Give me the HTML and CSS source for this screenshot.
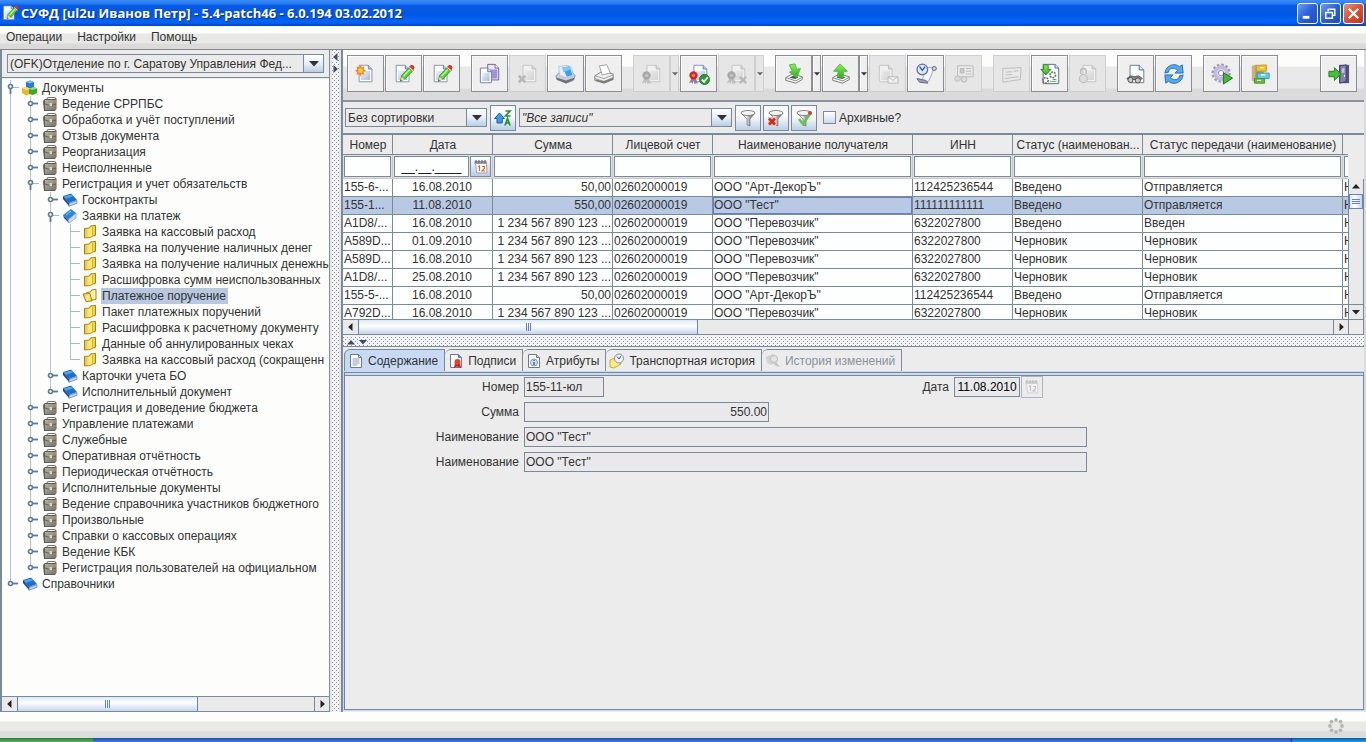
FILE: index.html
```html
<!DOCTYPE html>
<html lang="ru">
<head>
<meta charset="utf-8">
<title>СУФД [ul2u Иванов Петр] - 5.4-patch46 - 6.0.194 03.02.2012</title>
<link rel="stylesheet" href="styles.css">
</head>
<body>
<svg class="defs" aria-hidden="true">
  <defs>
    <linearGradient id="gp" x1="0" y1="0" x2="1" y2="1"><stop offset="0" stop-color="#f0f3fb"/><stop offset="1" stop-color="#a9b8de"/></linearGradient>
    <linearGradient id="gf" x1="0" y1="0" x2="1" y2="0"><stop offset="0" stop-color="#e8bd2c"/><stop offset=".5" stop-color="#fff283"/><stop offset="1" stop-color="#edc630"/></linearGradient>
    <linearGradient id="gm" x1="0" y1="0" x2="1" y2="0"><stop offset="0" stop-color="#777"/><stop offset=".35" stop-color="#f4f4f4"/><stop offset=".65" stop-color="#999"/><stop offset="1" stop-color="#555"/></linearGradient>
    <linearGradient id="gl" x1="0" y1="0" x2="0" y2="1"><stop offset="0" stop-color="#8cf25c"/><stop offset="1" stop-color="#2eae1e"/></linearGradient>
    <linearGradient id="gc" x1="0" y1="0" x2="1" y2="1"><stop offset="0" stop-color="#b3b0a8"/><stop offset="1" stop-color="#77736a"/></linearGradient>
  </defs>
  <symbol id="page" viewBox="0 0 24 24"><path d="M4.500 2.500h10l4 4v14h-14z" fill="#fff" stroke="#7e8cae"/><path d="M6.500 8.500h10v10h-10z" fill="url(#gp)"/><path d="M14.500 2.500v4h4" fill="#bcd0f0" stroke="#5678b8"/></symbol>
  <symbol id="pencil" viewBox="0 0 24 24"><path d="M8 20l1.500-6.500 9-9.500 4 3.500-9 9.500z" fill="#5bd232" stroke="#24821a" stroke-width=".8"/><path d="M11.500 14.500l8-8.500" stroke="#b5f98c" stroke-width="1.500"/><path d="M8 20l1.400-5 3.200 2.900z" fill="#f0d8a0"/><path d="M8 20l.5-2 1.200 1z" fill="#333"/><circle cx="20.500" cy="5" r="2.800" fill="#e03328"/><path d="M17.800 4.800l3.900 3.500" stroke="#ddd" stroke-width="1.300"/></symbol>
  <symbol id="i-new" viewBox="0 0 24 24"><use href="#page"/><path d="M6 2l1.500 2.700 3-.9-.9 3L12 8.500l-2.700 1.500.9 3-3-.9L6 15l-1.500-2.900-3 .9.9-3L0 8.500l2.500-1.700-.9-3 3 .9z" fill="#f58a1c"/><circle cx="6" cy="8.300" r="2.500" fill="#ffd34d"/></symbol>
  <symbol id="i-edit" viewBox="0 0 24 24"><use href="#page" x="-1"/><use href="#pencil"/></symbol>
  <symbol id="i-copy" viewBox="0 0 24 24"><path d="M9.500 1.500h8l4 4v13h-12z" fill="#ece8fa" stroke="#685c99"/><path d="M12 7h8v10h-8z" fill="#a394d0"/><path d="M17.500 1.500v4h4" fill="#fff" stroke="#685c99"/><path d="M1.500 5.500h8l4 4v12h-12z" fill="#fff" stroke="#6b7da6"/><path d="M3.500 10.500h8v9h-8z" fill="url(#gp)"/><path d="M9.500 5.500v4h4" fill="#c7d7f2" stroke="#5678b8"/></symbol>
  <symbol id="i-del" viewBox="0 0 24 24"><use href="#page" x="2"/><path d="M2 14l7 7M9 14l-7 7" stroke="#777" stroke-width="3"/></symbol>
  <symbol id="i-scan" viewBox="0 0 24 24"><path d="M1 14l4-4h14l3 4-2 5-8 3-10-4z" fill="#c9ccd1" stroke="#8a8d92"/><path d="M2 16l10 3 9-3v2l-9 4-10-4z" fill="#6b7078"/><path d="M4 4l9-1.500 5 2 2 9-8 2.500-7-3z" fill="#e6eef6" stroke="#b7c6d8"/><path d="M8 5l8-1.500 3 9.500-6 2z" fill="#3aa0ec"/><path d="M8 5l8-1.500 1 3.500-8 3z" fill="#7cc7f8"/></symbol>
  <symbol id="i-print" viewBox="0 0 24 24"><path d="M2 14l8-5 12 3v6l-10 4-10-3z" fill="#f1f1f2" stroke="#7c7c7c"/><path d="M7 3l8-1 4 9-9 2z" fill="#fff" stroke="#999"/><path d="M2 14l10 3 10-4M2 17l10 3 10-4" fill="none" stroke="#999"/><path d="M3 19l9 3 10-4v-2l-10 4-9-2z" fill="#777"/></symbol>
  <symbol id="i-seal" viewBox="0 0 24 24"><use href="#page" x="2"/><path d="M4 16l-3 6 3-1 1 2 2-6zM8 16l3 6h-2l-2 1-1-6z" fill="#7f86a3"/><circle cx="6" cy="13.500" r="4.500" fill="#d9271c"/><circle cx="6" cy="13.500" r="1.800" fill="#f27c5e"/></symbol>
  <symbol id="i-sealok" viewBox="0 0 24 24"><use href="#i-seal"/><circle cx="18" cy="18" r="5.500" fill="#2a9e35" stroke="#1c7327"/><path d="M15 18l2.500 2.500 4-5" fill="none" stroke="#fff" stroke-width="2"/></symbol>
  <symbol id="i-sealx" viewBox="0 0 24 24"><use href="#i-seal"/><path d="M15 15l7 7M22 15l-7 7" stroke="#777" stroke-width="2.500"/></symbol>
  <symbol id="tray" viewBox="0 0 24 24"><path d="M3 16l7-4 11 3v3l-7 4-11-3z" fill="#f3f3f3" stroke="#777"/><path d="M3 16l11 3.500 7-4" fill="none" stroke="#888"/><path d="M7 16l4-2 6 1.500-3.500 2z" fill="#555"/></symbol>
  <symbol id="i-in" viewBox="0 0 24 24"><use href="#tray"/><path d="M7 2l6-1 2 6 4-1-4 10-8-6 3-1z" fill="url(#gl)" stroke="#48b83a"/></symbol>
  <symbol id="i-out" viewBox="0 0 24 24"><use href="#tray"/><path d="M11 1l8 8h-4l-1 7-6-1 1-6H4z" fill="url(#gl)" stroke="#48b83a"/></symbol>
  <symbol id="i-mail" viewBox="0 0 24 24"><use href="#page" x="-2"/><path d="M12 15h11v7H12z" fill="#fff" stroke="#777"/><path d="M12 15l5.500 4 5.500-4" fill="none" stroke="#777"/></symbol>
  <symbol id="i-hist" viewBox="0 0 24 24"><path d="M12 5h9l-6 15H5c3 0 4-4 5-8z" fill="#f6f6fa" stroke="#a0a3b4"/><path d="M2 17l10 2 2 3-9-1z" fill="#9aa0b8" stroke="#60667e"/><circle cx="21" cy="6" r="2.300" fill="#c9cbd6" stroke="#60667e"/><circle cx="8" cy="7" r="5.800" fill="#cfeafc" stroke="#6a6f9c" stroke-width="1.400"/><path d="M5 4l3 4 3-4" fill="none" stroke="#26487e" stroke-width="1.200"/></symbol>
  <symbol id="i-cardb" viewBox="0 0 24 24"><path d="M5 3h17v12H5z" fill="#eee" stroke="#777"/><path d="M8 6h4v5H8zM14 6h6M14 9h6M14 12h6" fill="#999" stroke="#777"/><circle cx="5" cy="17" r="3" fill="#ccc" stroke="#777"/><circle cx="12" cy="18" r="3" fill="#ccc" stroke="#777"/></symbol>
  <symbol id="i-card" viewBox="0 0 24 24"><path d="M2 6l20-1-1 13-19 3z" fill="#eee" stroke="#777"/><path d="M5 10l7-.500M5 13l7-.500M14 9l5-.500M4 17l15-2" stroke="#777"/></symbol>
  <symbol id="i-load" viewBox="0 0 24 24"><path d="M4.500 1.500h13l4 4v17h-17z" fill="#fff" stroke="#59628a"/><path d="M17.500 1.500v4h4" fill="#d5e3f8" stroke="#3e67b5"/><path d="M5 2h5v5h3l-5.500 6L2 7h3z" fill="url(#gl)" stroke="#208a1d"/><g fill="none" stroke="#777" stroke-width="2" stroke-dasharray="2 1"><circle cx="7" cy="19" r="3"/><circle cx="15" cy="13" r="3"/></g><path d="M12 20h7M15 18h4" stroke="#56a442"/></symbol>
  <symbol id="i-lock" viewBox="0 0 24 24"><use href="#page" x="2"/><circle cx="7" cy="17" r="4.500" fill="#ccc" stroke="#777"/><path d="M4 12V9a3 3 0 0 1 6 0v3" fill="none" stroke="#777" stroke-width="1.500"/></symbol>
  <symbol id="i-find" viewBox="0 0 24 24"><path d="M5.500 2.500h10l5 5v14h-15z" fill="#fff" stroke="#68718a"/><path d="M15.500 2.500v5h5" fill="#d9e5f8" stroke="#3e67b5"/><path d="M2 17l4-3 4 1 5-1 4 3-2 1H3z" fill="#888" stroke="#555"/><circle cx="6" cy="18.500" r="2.800" fill="#ccc" stroke="#444"/><circle cx="14" cy="19" r="2.800" fill="#ccc" stroke="#444"/></symbol>
  <symbol id="i-refresh" viewBox="0 0 24 24"><path d="M2 11C3 3 12-1 18 4l3-2 1 9h-9l3-3C12 4 6 6 6 10z" fill="#54a8ee" stroke="#236ab3"/><path d="M22 13c-1 8-10 12-16 7l-3 2-1-9h9l-3 3c4 4 10 2 10-2z" fill="#54a8ee" stroke="#236ab3"/></symbol>
  <symbol id="i-run" viewBox="0 0 24 24"><circle cx="11" cy="11" r="9" fill="none" stroke="#9a96c4" stroke-width="3" stroke-dasharray="2.700 2"/><circle cx="11" cy="11" r="6.300" fill="#eceafa" stroke="#c0bcda" stroke-width="4"/><circle cx="11" cy="11" r="3" fill="#fff" stroke="#8883b3"/><path d="M13.500 10.500l10 6-10 6.500z" fill="#42b838" stroke="#186f18"/></symbol>
  <symbol id="i-cab" viewBox="0 0 24 24"><path d="M3 3l5-1v20l-5-3z" fill="#ccb27a"/><path d="M7 2h9v20H7z" fill="#8b9a7a"/><path d="M8 3l11-1v7H8z" fill="#f6bd24" stroke="#d29a1c"/><path d="M9 11h13v6H9z" fill="#59cdf2" stroke="#28a0cc"/><path d="M6 17h11v5H6z" fill="#6eb53d" stroke="#4a8e2a"/><path d="M12 5h4M13 13h5M9 19h4" stroke="#fff" stroke-width="1.500"/></symbol>
  <symbol id="i-exit" viewBox="0 0 24 24"><path d="M12 2h11v20H12z" fill="#57567c"/><path d="M13 3l7-1v18l-7 2z" fill="#8581ac" stroke="#3f3e66"/><path d="M15 6l3-.500v5l-3 .500z" fill="#c3c4e4"/><path d="M18 13v2" stroke="#fff"/><path d="M1 9h6V5l7 7-7 7v-4H1z" fill="#47bf35" stroke="#1b7e1d"/></symbol>
  <symbol id="i-funnel" viewBox="0 0 18 18"><path d="M2 4l6 6v6l3 1v-7l5-6z" fill="url(#gm)" stroke="#666" stroke-width=".6"/><ellipse cx="9" cy="4" rx="7" ry="2.500" fill="#f4f4f4" stroke="#777" stroke-width=".9"/></symbol>
  <symbol id="i-funnelx" viewBox="0 0 18 18"><use href="#i-funnel"/><path d="M1 8h8v9H1z" fill="#f5c9c0"/><path d="M2 9.500l6 6M8 9.500l-6 6" stroke="#d42a17" stroke-width="2.600"/></symbol>
  <symbol id="i-funnelok" viewBox="0 0 18 18"><use href="#i-funnel"/><path d="M4 10l4 5 7-10" fill="none" stroke="#62c64c" stroke-width="2.600"/><circle cx="15" cy="4" r="2" fill="#e0392a"/></symbol>
  <symbol id="i-sort" viewBox="0 0 18 18"><path d="M5.500 4l5 5.500H8.200V14H3v-4.500H.5z" fill="#3d9ae8" stroke="#1a5cab"/><path d="M11.500 2h4.500l-4.500 5h5" fill="none" stroke="#24902a" stroke-width="1.700"/><path d="M11 16.500l2.500-7 2.500 7M12 14h3" fill="none" stroke="#24902a" stroke-width="1.700"/></symbol>
  <symbol id="i-cal" viewBox="0 0 16 16"><path d="M2.500 3.500h11l.5 10.500H3.500z" fill="#fff" stroke="#a0a4b4"/><path d="M1.500 2h12v3h-12z" fill="#9a9db0"/><path d="M3 1v3M6 1v3M9 1v3M12 1v3" stroke="#556"/><path d="M5 7.800L6.500 7v5M9 7.500h2.500v1.800l-2.500 2.700h3" fill="none" stroke="#e4671c" stroke-width="1.200"/></symbol>
  <symbol id="i-cubes" viewBox="0 0 16 16"><path d="M4 2l4-1.500L12 2v5L8 8.500 4 7z" fill="#2b79dd"/><path d="M4 2l4-1.500L12 2 8 3.500z" fill="#80b9f5"/><path d="M0 8l4-1 4 2v5l-4 1.500L0 13z" fill="#efb51d"/><path d="M0 8l4-1 4 2-4 1z" fill="#ffe37a"/><path d="M7 9l5-2 3 1.500V13l-4 2-4-1z" fill="#3fa72c"/><path d="M7 9l5-2 3 1.500L11 10z" fill="#95e36d"/></symbol>
  <symbol id="i-case" viewBox="0 0 16 16"><path d="M5 3q0-1.500 2-1.500h5q2 0 2 1.500" fill="none" stroke="#77746c" stroke-width="1.200"/><path d="M1 5l2-2h11.500v10L13 15H2z" fill="#5f5c54"/><path d="M3 4h11v10H3z" fill="url(#gc)"/><path d="M3 8l5.500 1.500L14 8" fill="none" stroke="#67635a"/><path d="M7.500 7H10v3H7.500z" fill="#e7d79a"/></symbol>
  <symbol id="i-book" viewBox="0 0 16 16"><path d="M1 4l8-2.500 6 6.500-8 3z" fill="#1d6ed0"/><path d="M2 4.500l7-2 2 2-7 2.300z" fill="#4fa3f0"/><path d="M1 4v3l6 7v-3z" fill="#0f4a9a"/><path d="M7 11.500l8-3v2.700L7 14.300z" fill="#c9d9ec" stroke="#2b66ad" stroke-width=".6"/></symbol>
  <symbol id="i-bookopen" viewBox="0 0 16 16"><path d="M1 7l8-6 5 4-8 7z" fill="#2a86e0"/><path d="M1 7l1 3 5 5-1-3z" fill="#0f4a9a"/><path d="M6 12l8-7v5l-7 5z" fill="#cfdef0" stroke="#6a87ad" stroke-width=".6"/><path d="M4 7l5-4" stroke="#9fd2fb"/></symbol>
  <symbol id="i-fold" viewBox="0 0 16 16"><path d="M2.500 4.500l5-.500 1-2 5-.700v10l-3.500 1-1.500 1.200-6 .500z" fill="url(#gf)" stroke="#a88413"/><path d="M10.500 3v9" stroke="#dcb62c"/></symbol>
  <symbol id="i-foldopen" viewBox="0 0 16 16"><path d="M4.500 4.500l4-.500 1-2 4.500-.700v10l-5 1-5 .500z" fill="#fff3a5" stroke="#a88413"/><path d="M1 6l7-.500 2 7.500-6 .500z" fill="url(#gf)" stroke="#a88413"/></symbol>
  <symbol id="h-closed" viewBox="0 0 16 16"><circle cx="6.500" cy="7.500" r="2" fill="#fff" stroke="#5878a6" stroke-width="1.600"/><path d="M9 7.500h5" stroke="#5878a6" stroke-width="1.800"/></symbol>
  <symbol id="h-open" viewBox="0 0 16 16"><path d="M9 7.500h6" stroke="#a5b8ce"/><circle cx="6.500" cy="6.500" r="2" fill="#fff" stroke="#5878a6" stroke-width="1.600"/><path d="M6.500 9v5" stroke="#5878a6" stroke-width="1.800"/></symbol>
  <symbol id="h-leaf" viewBox="0 0 16 16"><path d="M6 7.500h10" stroke="#a5b8ce"/></symbol>
  <symbol id="a-down" viewBox="0 0 10 6"><path d="M0 0h10L5 5.500z" fill="currentColor"/></symbol>
  <symbol id="a-up" viewBox="0 0 10 6"><path d="M0 5.500h10L5 0z" fill="currentColor"/></symbol>
  <symbol id="a-left" viewBox="0 0 6 10"><path d="M5.500 0v10L0 5z" fill="currentColor"/></symbol>
  <symbol id="a-right" viewBox="0 0 6 10"><path d="M.500 0v10L6 5z" fill="currentColor"/></symbol>
  <symbol id="t-page" viewBox="0 0 16 16"><path d="M2.500 1.500h8l3 3v10h-11z" fill="#fff" stroke="#6a7a98"/><path d="M10.500 1.500v3h3" fill="none" stroke="#6a7a98"/><path d="M4.500 6h7M4.500 8h7M4.500 10h7M4.500 12h5" stroke="#8d98ac"/></symbol>
  <symbol id="t-sign" viewBox="0 0 16 16"><path d="M2.500 1.500h8l3 3v10h-11z" fill="#fff" stroke="#6a7a98"/><path d="M10.500 1.500v3h3" fill="#6e9ee6" stroke="#4774b8"/><path d="M7 10l-1 5 3-1.500L13 15l-1-5z" fill="#c82314"/><circle cx="9.500" cy="9" r="3" fill="#e8402a"/></symbol>
  <symbol id="t-info" viewBox="0 0 16 16"><path d="M2.500 1.500h8l3 3v10h-11z" fill="#fff" stroke="#6a7a98"/><path d="M10.500 1.500v3h3" fill="#c8d8f0" stroke="#6a7a98"/><circle cx="8" cy="9.500" r="3.500" fill="#cfddf2" stroke="#8499b8"/><path d="M8 9v3M8 7v1" stroke="#456" stroke-width="1.300"/></symbol>
  <symbol id="t-hist" viewBox="0 0 16 16"><path d="M1 7l7-3 4 7-7 4-4-1z" fill="#ffe66e" stroke="#ccae2c"/><path d="M2 11l7-3M3 13l7-3" stroke="#fff8bc"/><circle cx="10" cy="5.500" r="4.500" fill="#eef2fa" stroke="#818ba0"/><path d="M8 3.500l2 2.500 2-3" fill="none" stroke="#445a80"/></symbol>
  <symbol id="t-change" viewBox="0 0 16 16"><path d="M1 4l7-3 5 7-7 4-4-2z" fill="#d3d3d3"/><circle cx="9" cy="6" r="3.500" fill="#e6e6e6" stroke="#bbb"/><path d="M11 9l4 5-4-1-3-3z" fill="#c4c4c4"/></symbol>
</svg>

<header class="titlebar">
  <svg class="s18"><use href="#i-edit"/></svg>
  <h1>СУФД [ul2u Иванов Петр] - 5.4-patch46 - 6.0.194 03.02.2012</h1>
  <button class="win" aria-label="Свернуть"><svg viewBox="0 0 20 20"><path d="M5 14h7" stroke="#fff" stroke-width="3"/></svg></button>
  <button class="win" aria-label="Восстановить"><svg viewBox="0 0 20 20"><path d="M8 5.500h7M14.500 5v7h-2M7.500 5v3" fill="none" stroke="#fff" stroke-width="1.500"/><path d="M5 9h7v6H5z" fill="none" stroke="#fff" stroke-width="1.600"/></svg></button>
  <button class="win close" aria-label="Закрыть"><svg viewBox="0 0 20 20"><path d="M5 5l10 10M15 5L5 15" stroke="#fff" stroke-width="2.400"/></svg></button>
</header>
<nav class="menubar">
  <button>Операции</button><button>Настройки</button><button>Помощь</button>
</nav>

<main class="work">
  <aside class="side">
    <div class="orgbar">
      <div class="combo"><select aria-label="Организация"><option>(OFK)Отделение по г. Саратову Управления Фед...</option></select><span class="arrow"><svg><use href="#a-down"/></svg></span></div>
    </div>
    <ul class="tree">
      <li><div class="node"><svg><use href="#h-open"/></svg><svg><use href="#i-cubes"/></svg><span>Документы</span></div>
        <ul>
          <li><div class="node"><svg><use href="#h-closed"/></svg><svg><use href="#i-case"/></svg><span>Ведение СРРПБС</span></div></li>
          <li><div class="node"><svg><use href="#h-closed"/></svg><svg><use href="#i-case"/></svg><span>Обработка и учёт поступлений</span></div></li>
          <li><div class="node"><svg><use href="#h-closed"/></svg><svg><use href="#i-case"/></svg><span>Отзыв документа</span></div></li>
          <li><div class="node"><svg><use href="#h-closed"/></svg><svg><use href="#i-case"/></svg><span>Реорганизация</span></div></li>
          <li><div class="node"><svg><use href="#h-closed"/></svg><svg><use href="#i-case"/></svg><span>Неисполненные</span></div></li>
          <li><div class="node"><svg><use href="#h-open"/></svg><svg><use href="#i-case"/></svg><span>Регистрация и учет обязательств</span></div>
            <ul>
              <li><div class="node"><svg><use href="#h-closed"/></svg><svg><use href="#i-book"/></svg><span>Госконтракты</span></div></li>
              <li><div class="node"><svg><use href="#h-open"/></svg><svg><use href="#i-bookopen"/></svg><span>Заявки на платеж</span></div>
                <ul>
                  <li><div class="node"><svg><use href="#h-leaf"/></svg><svg><use href="#i-fold"/></svg><span>Заявка на кассовый расход</span></div></li>
                  <li><div class="node"><svg><use href="#h-leaf"/></svg><svg><use href="#i-fold"/></svg><span>Заявка на получение наличных денег</span></div></li>
                  <li><div class="node"><svg><use href="#h-leaf"/></svg><svg><use href="#i-fold"/></svg><span>Заявка на получение наличных денежны</span></div></li>
                  <li><div class="node"><svg><use href="#h-leaf"/></svg><svg><use href="#i-fold"/></svg><span>Расшифровка сумм неиспользованных</span></div></li>
                  <li><div class="node"><svg><use href="#h-leaf"/></svg><svg><use href="#i-foldopen"/></svg><span class="picked">Платежное поручение</span></div></li>
                  <li><div class="node"><svg><use href="#h-leaf"/></svg><svg><use href="#i-fold"/></svg><span>Пакет платежных поручений</span></div></li>
                  <li><div class="node"><svg><use href="#h-leaf"/></svg><svg><use href="#i-fold"/></svg><span>Расшифровка к расчетному документу</span></div></li>
                  <li><div class="node"><svg><use href="#h-leaf"/></svg><svg><use href="#i-fold"/></svg><span>Данные об аннулированных чеках</span></div></li>
                  <li><div class="node"><svg><use href="#h-leaf"/></svg><svg><use href="#i-fold"/></svg><span>Заявка на кассовый расход (сокращенн</span></div></li>
                </ul>
              </li>
              <li><div class="node"><svg><use href="#h-closed"/></svg><svg><use href="#i-book"/></svg><span>Карточки учета БО</span></div></li>
              <li><div class="node"><svg><use href="#h-closed"/></svg><svg><use href="#i-book"/></svg><span>Исполнительный документ</span></div></li>
            </ul>
          </li>
          <li><div class="node"><svg><use href="#h-closed"/></svg><svg><use href="#i-case"/></svg><span>Регистрация и доведение бюджета</span></div></li>
          <li><div class="node"><svg><use href="#h-closed"/></svg><svg><use href="#i-case"/></svg><span>Управление платежами</span></div></li>
          <li><div class="node"><svg><use href="#h-closed"/></svg><svg><use href="#i-case"/></svg><span>Служебные</span></div></li>
          <li><div class="node"><svg><use href="#h-closed"/></svg><svg><use href="#i-case"/></svg><span>Оперативная отчётность</span></div></li>
          <li><div class="node"><svg><use href="#h-closed"/></svg><svg><use href="#i-case"/></svg><span>Периодическая отчётность</span></div></li>
          <li><div class="node"><svg><use href="#h-closed"/></svg><svg><use href="#i-case"/></svg><span>Исполнительные документы</span></div></li>
          <li><div class="node"><svg><use href="#h-closed"/></svg><svg><use href="#i-case"/></svg><span>Ведение справочника участников бюджетного</span></div></li>
          <li><div class="node"><svg><use href="#h-closed"/></svg><svg><use href="#i-case"/></svg><span>Произвольные</span></div></li>
          <li><div class="node"><svg><use href="#h-closed"/></svg><svg><use href="#i-case"/></svg><span>Справки о кассовых операциях</span></div></li>
          <li><div class="node"><svg><use href="#h-closed"/></svg><svg><use href="#i-case"/></svg><span>Ведение КБК</span></div></li>
          <li><div class="node"><svg><use href="#h-closed"/></svg><svg><use href="#i-case"/></svg><span>Регистрация пользователей на официальном</span></div></li>
        </ul>
      </li>
      <li><div class="node"><svg><use href="#h-closed"/></svg><svg><use href="#i-book"/></svg><span>Справочники</span></div></li>
    </ul>
    <div class="hscroll side-scroll">
      <button class="sb" aria-label="Влево"><svg class="ah"><use href="#a-left"/></svg></button>
      <div class="thumb"></div><div class="track"></div>
      <button class="sb" aria-label="Вправо"><svg class="ah"><use href="#a-right"/></svg></button>
    </div>
  </aside>

  <div class="vsplit"><svg class="ah"><use href="#a-left"/></svg><svg class="ah"><use href="#a-right"/></svg></div>

  <section class="content">
    <div class="toolbar">
      <div class="group">
        <button aria-label="Создать"><svg><use href="#i-new"/></svg></button>
        <button aria-label="Изменить"><svg><use href="#i-edit"/></svg></button>
        <button aria-label="Изменить запись"><svg><use href="#i-edit"/></svg></button>
      </div>
      <div class="group">
        <button aria-label="Копировать"><svg><use href="#i-copy"/></svg></button>
        <button disabled aria-label="Удалить"><svg><use href="#i-del"/></svg></button>
        <button aria-label="Просмотр печати"><svg><use href="#i-scan"/></svg></button>
        <button aria-label="Печать"><svg><use href="#i-print"/></svg></button>
      </div>
      <div class="group">
        <div class="split"><button disabled aria-label="Подписать"><svg><use href="#i-seal"/></svg></button><button disabled class="drop" aria-label="Ещё"><svg><use href="#a-down"/></svg></button></div>
        <button aria-label="Проверить подпись"><svg><use href="#i-sealok"/></svg></button>
        <div class="split"><button disabled aria-label="Удалить подпись"><svg><use href="#i-sealx"/></svg></button><button disabled class="drop" aria-label="Ещё"><svg><use href="#a-down"/></svg></button></div>
      </div>
      <div class="group">
        <div class="split"><button aria-label="Импорт"><svg><use href="#i-in"/></svg></button><button class="drop" aria-label="Ещё"><svg><use href="#a-down"/></svg></button></div>
        <div class="split"><button aria-label="Экспорт"><svg><use href="#i-out"/></svg></button><button class="drop" aria-label="Ещё"><svg><use href="#a-down"/></svg></button></div>
        <button disabled aria-label="Отправить"><svg><use href="#i-mail"/></svg></button>
        <button aria-label="История"><svg><use href="#i-hist"/></svg></button>
        <button disabled aria-label="Карточка"><svg><use href="#i-cardb"/></svg></button>
      </div>
      <div class="group">
        <button disabled aria-label="Форма"><svg><use href="#i-card"/></svg></button>
        <button aria-label="Загрузить"><svg><use href="#i-load"/></svg></button>
        <button disabled aria-label="Блокировать"><svg><use href="#i-lock"/></svg></button>
      </div>
      <div class="group">
        <button aria-label="Найти"><svg><use href="#i-find"/></svg></button>
        <button aria-label="Обновить"><svg><use href="#i-refresh"/></svg></button>
      </div>
      <div class="group">
        <button aria-label="Выполнить"><svg><use href="#i-run"/></svg></button>
        <button aria-label="Архив"><svg><use href="#i-cab"/></svg></button>
      </div>
      <div class="group last">
        <button aria-label="Выход"><svg><use href="#i-exit"/></svg></button>
      </div>
    </div>

    <div class="filterbar">
      <div class="combo sort"><select aria-label="Сортировка"><option>Без сортировки</option></select><span class="arrow"><svg><use href="#a-down"/></svg></span></div>
      <button class="fb" aria-label="Сортировать"><svg><use href="#i-sort"/></svg></button>
      <div class="combo view"><select aria-label="Фильтр"><option>"Все записи"</option></select><span class="arrow"><svg><use href="#a-down"/></svg></span></div>
      <button class="fb" aria-label="Фильтр"><svg><use href="#i-funnel"/></svg></button>
      <button class="fb" aria-label="Сбросить фильтр"><svg><use href="#i-funnelx"/></svg></button>
      <button class="fb" aria-label="Применить фильтр"><svg><use href="#i-funnelok"/></svg></button>
      <label class="check"><input type="checkbox">Архивные?</label>
    </div>

    <div class="list">
      <div class="view-port">
        <table>
          <colgroup><col class="c50"><col class="c100"><col class="c120"><col class="c100"><col class="c200"><col class="c100"><col class="c130"><col class="c200"><col class="c100"></colgroup>
          <thead>
            <tr><th>Номер</th><th>Дата</th><th>Сумма</th><th>Лицевой счет</th><th>Наименование получателя</th><th>ИНН</th><th>Статус (наименован...</th><th>Статус передачи (наименование)</th><th></th></tr>
            <tr class="filters"><td><input aria-label="Номер"></td><td><div class="datef"><input aria-label="Дата" value="__.__.____"><button aria-label="Календарь"><svg class="s16"><use href="#i-cal"/></svg></button></div></td><td><input aria-label="Сумма"></td><td><input aria-label="Лицевой счет"></td><td><input aria-label="Наименование получателя"></td><td><input aria-label="ИНН"></td><td><input aria-label="Статус"></td><td><input aria-label="Статус передачи"></td><td><input aria-label="Прочее"></td></tr>
          </thead>
          <tbody>
            <tr><td>155-6-...</td><td>16.08.2010</td><td>50,00</td><td>02602000019</td><td>ООО "Арт-ДекорЪ"</td><td>112425236544</td><td>Введено</td><td>Отправляется</td><td>Н</td></tr>
            <tr class="sel"><td>155-1...</td><td>11.08.2010</td><td>550,00</td><td>02602000019</td><td class="focus">ООО "Тест"</td><td>111111111111</td><td>Введено</td><td>Отправляется</td><td>Н</td></tr>
            <tr><td>A1D8/...</td><td>16.08.2010</td><td>1 234 567 890 123 ...</td><td>02602000019</td><td>ООО "Перевозчик"</td><td>6322027800</td><td>Введено</td><td>Введен</td><td>Н</td></tr>
            <tr><td>A589D...</td><td>01.09.2010</td><td>1 234 567 890 123 ...</td><td>02602000019</td><td>ООО "Перевозчик"</td><td>6322027800</td><td>Черновик</td><td>Черновик</td><td>Н</td></tr>
            <tr><td>A589D...</td><td>16.08.2010</td><td>1 234 567 890 123 ...</td><td>02602000019</td><td>ООО "Перевозчик"</td><td>6322027800</td><td>Черновик</td><td>Черновик</td><td>Н</td></tr>
            <tr><td>A1D8/...</td><td>25.08.2010</td><td>1 234 567 890 123 ...</td><td>02602000019</td><td>ООО "Перевозчик"</td><td>6322027800</td><td>Черновик</td><td>Черновик</td><td>Н</td></tr>
            <tr><td>155-5-...</td><td>16.08.2010</td><td>50,00</td><td>02602000019</td><td>ООО "Арт-ДекорЪ"</td><td>112425236544</td><td>Введено</td><td>Отправляется</td><td>Н</td></tr>
            <tr><td>A792D...</td><td>16.08.2010</td><td>1 234 567 890 123 ...</td><td>02602000019</td><td>ООО "Перевозчик"</td><td>6322027800</td><td>Черновик</td><td>Черновик</td><td>Н</td></tr>
          </tbody>
        </table>
      </div>
      <div class="vscroll">
        <button class="sb" aria-label="Вверх"><svg class="av"><use href="#a-up"/></svg></button>
        <div class="vthumb"></div><div class="vtrack"></div>
        <button class="sb" aria-label="Вниз"><svg class="av"><use href="#a-down"/></svg></button>
      </div>
      <div class="hscroll list-scroll">
        <button class="sb" aria-label="Влево"><svg class="ah"><use href="#a-left"/></svg></button>
        <div class="thumb"></div><div class="track"></div>
        <button class="sb" aria-label="Вправо"><svg class="ah"><use href="#a-right"/></svg></button>
      </div>
      <div class="corner"></div>
    </div>

    <div class="hsplit"><svg><use href="#a-up"/></svg><svg><use href="#a-down"/></svg></div>

    <div class="tabs" role="tablist">
      <button role="tab" aria-selected="true"><svg class="s16"><use href="#t-page"/></svg>Содержание</button>
      <button role="tab"><svg class="s16"><use href="#t-sign"/></svg>Подписи</button>
      <button role="tab"><svg class="s16"><use href="#t-info"/></svg>Атрибуты</button>
      <button role="tab"><svg class="s16"><use href="#t-hist"/></svg>Транспортная история</button>
      <button role="tab" disabled><svg class="s16"><use href="#t-change"/></svg>История изменений</button>
    </div>
    <form class="panel">
      <div class="line"><label for="num">Номер</label><input id="num" class="w80" value="155-11-юл" readonly><label class="dl" for="date">Дата</label><input id="date" class="date" value="11.08.2010"><button type="button" class="calb" disabled aria-label="Календарь"><svg class="s16"><use href="#i-cal"/></svg></button></div>
      <div class="line"><label for="sum">Сумма</label><input id="sum" class="w245" value="550.00" readonly></div>
      <div class="line"><label for="n1">Наименование</label><input id="n1" class="w563" value='ООО "Тест"' readonly></div>
      <div class="line"><label for="n2">Наименование</label><input id="n2" class="w563" value='ООО "Тест"' readonly></div>
    </form>
  </section>
</main>

<footer class="status">
  <svg viewBox="0 0 16 16" class="s16"><g fill="#b5b5b2"><circle cx="8" cy="2" r="1.900"/><circle cx="12.500" cy="3.700" r="1.900"/><circle cx="14" cy="8" r="1.900"/><circle cx="12.500" cy="12.300" r="1.900"/><circle cx="8" cy="14" r="1.900"/><circle cx="3.500" cy="12.300" r="1.900"/><circle cx="2" cy="8" r="1.900"/><circle cx="3.500" cy="3.700" r="1.900"/></g></svg>
</footer>
<div class="taskbar"><span class="start"></span><span class="tray"></span></div>
</body>
</html>
```
FILE: styles.css
```css
* { box-sizing: border-box; }
body {
  margin: 0;
  height: 100vh;
  display: flex;
  flex-direction: column;
  overflow: hidden;
  font: 12px/16px "Liberation Sans", Arial, sans-serif;
  color: #333;
  background: #ececec;
}
button, input, select { font: inherit; color: inherit; margin: 0; padding: 0; border-radius: 0; }
button { display: flex; align-items: center; justify-content: center; border: 0; background: none; }
svg { display: block; flex: none; }
.defs { position: absolute; width: 0; height: 0; }
.s16 { width: 16px; height: 16px; }
.s18 { width: 18px; height: 18px; }
.ah { width: 5px; height: 8px; }
.av { width: 8px; height: 5px; }

.titlebar {
  flex: none;
  height: 26px;
  display: flex;
  align-items: center;
  gap: 2px;
  padding: 0 2px 0 1px;
  background: linear-gradient(#3b8cf8 0, #2a80f4 3px, #0559e4 6px, #0458e6 16px, #0264fb 20px, #0161f5 23px, #0141c0 26px);
}
.titlebar h1 {
  flex: 1;
  margin: 0;
  font: bold 13px/18px "Open Sans", sans-serif;
  color: #fff;
  text-shadow: 1px 1px 1px #0a2f86;
}
.win {
  width: 21px;
  height: 21px;
  border: 1px solid #fff;
  border-radius: 3px;
  background: linear-gradient(135deg, #6f9df2, #2a5fd8 50%, #1b4cc4);
}
.win svg { width: 19px; height: 19px; }
.win.close { background: linear-gradient(135deg, #ee9277, #d94f2c 50%, #bf3a16); }

.menubar {
  flex: none;
  height: 24px;
  display: flex;
  gap: 15px;
  padding-left: 6px;
  background: linear-gradient(#fdfefc 7px, #e8e9e6 8px, #e8e9e6 17px, #dadbd8 18px);
  border-bottom: 1px solid #85858c;
}
.menubar button { height: 21px; }

.work { flex: 1; min-height: 0; display: flex; }

.side {
  width: 330px;
  flex: none;
  display: flex;
  flex-direction: column;
  border-left: 2px solid #7a8a99;
  border-right: 1px solid #7a8a99;
}
.orgbar {
  height: 28px;
  padding: 4px 5px;
  border-bottom: 1px solid #7a8a99;
}
.combo { display: flex; height: 19px; border: 1px solid #7a8a99; background: #eaeaea; }
.combo select {
  flex: 1;
  min-width: 0;
  appearance: none;
  border: 0;
  padding: 0 2px;
  background: none;
}
.arrow {
  width: 20px;
  display: flex;
  align-items: center;
  justify-content: center;
  border-left: 1px solid #7a8a99;
  background: linear-gradient(#fff, #e6eef8 50%, #b8cfe5);
}
.arrow svg { width: 10px; height: 6px; }

.tree {
  flex: 1;
  min-height: 0;
  overflow: hidden;
  margin: 1px 0 0;
  padding: 1px 0 0;
  background: #fdfefc;
  list-style: none;
  white-space: nowrap;
}
.tree ul { margin: 0; padding: 0 0 0 20px; list-style: none; }
.tree li { background: linear-gradient(#b3c3d6, #b3c3d6) 8px 0 / 1px 100% no-repeat; }
.tree li:last-child { background-size: 1px 8px; }
.node { display: flex; height: 16px; padding-left: 2px; }
.node svg { width: 16px; height: 16px; }
.node svg + svg { margin-left: 2px; }
.node span { margin-left: 3px; padding-left: 1px; }
.node .picked { padding-right: 2px; background: #b8c8e0; }

.hscroll { display: flex; height: 16px; border: solid #7a8a99; border-width: 1px 0; background: #eaeaea; }
.sb { width: 15px; flex: none; color: #222; }
.hscroll .sb:last-child { border-left: 1px solid #7a8a99; }
.thumb {
  border: solid #6382bf;
  border-width: 0 1px;
  background:
    repeating-linear-gradient(90deg, #6382bf 0 1px, transparent 1px 2px) 50% 50% / 5px 8px no-repeat,
    linear-gradient(#dbe8f7, #fff 40%, #c5d6ee);
}
.track { flex: 1; }
.side-scroll .thumb { width: 181px; }
.list-scroll .thumb { width: 340px; }

.vsplit, .hsplit {
  display: flex;
  background:
    radial-gradient(circle at 0 0, #8a93a3 1px, transparent 1px) 0 0 / 4px 4px,
    radial-gradient(circle at 0 0, #8a93a3 1px, transparent 1px) 2px 2px / 4px 4px,
    #f2f2f2;
  color: #3c4a6b;
}
.vsplit {
  width: 11px;
  flex: none;
  flex-direction: column;
  align-items: center;
  gap: 4px;
  padding-top: 3px;
  border: solid #e6e6e6;
  border-width: 0 2px;
}
.vsplit .ah, .hsplit svg { background: #f2f2f2; }
.hsplit { height: 12px; flex: none; gap: 4px; padding: 3px 4px; border-bottom: 1px solid #7a8a99; border-top: 2px solid #f2f2f2; }
.hsplit svg { width: 8px; height: 5px; }

.content {
  flex: 1;
  min-width: 0;
  display: flex;
  flex-direction: column;
  border-left: 2px solid #7a8a99;
  border-right: 2px solid #d5dbe4;
}
.toolbar {
  flex: none;
  height: 52px;
  display: flex;
  gap: 11px;
  padding: 5px 7px 0 4px;
  background: linear-gradient(#fdfefc 16px, #e8e9e8 17px, #e8e9e8 38px, #d9dad9 39px);
  border-bottom: 2px solid #8b929c;
}
.group, .split { display: flex; align-items: flex-start; }
.group { gap: 1px; }
.group.last { margin-left: auto; }
.toolbar button {
  width: 37px;
  height: 37px;
  border: 1px solid #8b8f94;
  background: #efefef;
  box-shadow: inset 1px 1px #fafafa;
}
.toolbar button svg { width: 22px; height: 22px; }
.toolbar .drop { width: 9px; color: #333; }
.toolbar .drop svg { width: 6px; height: 4px; }
.toolbar button:disabled { border-color: #cfcfcf; background: #e6e6e6; box-shadow: none; }
.toolbar button:disabled svg { filter: grayscale(1); opacity: 0.4; }
.toolbar .drop:disabled svg { opacity: 0.7; }

.filterbar {
  flex: none;
  height: 32px;
  display: flex;
  align-items: center;
  gap: 2px;
  padding: 0 2px;
  background: #eaeaec;
  border-bottom: 1px solid #7a8a99;
}
.sort { width: 142px; margin-right: 1px; }
.view { width: 213px; margin: 0 1px; font-style: italic; }
.fb { width: 26px; height: 26px; border: 1px solid #7a8a99; background: linear-gradient(#f4f8fc, #fff 40%, #b8cfe5); }
.fb svg { width: 18px; height: 18px; }
.check { display: flex; align-items: center; gap: 3px; margin-left: 4px; }
.check input {
  appearance: none;
  width: 13px;
  height: 13px;
  border: 1px solid #7a8a99;
  background: linear-gradient(#fff, #c9dbee);
}

.list {
  flex: none;
  display: grid;
  grid-template-columns: 1fr 16px;
  border-top: 1px solid #7a8a99;
}
.view-port { height: 184px; overflow: hidden; min-width: 0; background: #fdfefe; }
table { width: 1100px; table-layout: fixed; border-collapse: separate; border-spacing: 0; }
.c50 { width: 50px; }
.c100 { width: 100px; }
.c120 { width: 120px; }
.c130 { width: 130px; }
.c200 { width: 200px; }
th, td { padding: 0 2px 0 1px; border: solid #7a8a99; border-width: 0 1px 1px 0; white-space: nowrap; overflow: hidden; text-align: left; }
th { height: 20px; padding-left: 3px; font-weight: normal; text-align: center; background: #ececec; }
td { height: 18px; line-height: 17px; }
tbody td:nth-child(2) { text-align: center; }
tbody td:nth-child(3) { text-align: right; padding-right: 1px; }
.filters td { height: 24px; padding: 1px; border-color: #c9c9cc; background: #e0e0e2; }
.filters input { display: block; width: 100%; height: 21px; border: 1px solid #7a8a99; background: #fdfefe; }
.datef { display: flex; gap: 1px; }
.datef input { flex: 1; min-width: 0; text-align: center; color: #000; }
.datef button { width: 21px; border: 1px solid #7a8a99; background: linear-gradient(#fff, #b8cfe5); }
.sel td { background: #b8c9e4; }
.sel td.focus { box-shadow: inset 0 0 0 1px #6382bf; }

.vscroll { margin-top: 44px; display: flex; flex-direction: column; border: solid #7a8a99; border-width: 0 1px; background: #eaeaea; }
.vscroll .sb { height: 15px; width: auto; }
.vscroll .sb:last-child { border-top: 1px solid #7a8a99; }
.vthumb {
  height: 15px;
  border: 1px solid #6382bf;
  background:
    repeating-linear-gradient(#6382bf 0 1px, transparent 1px 2px) 50% 50% / 8px 5px no-repeat,
    linear-gradient(90deg, #dbe8f7, #fff 40%, #c5d6ee);
}
.vtrack { flex: 1; }
.corner { border: 1px solid #7a8a99; }

.tabs { flex: none; display: flex; padding: 2px 0 0 1px; }
.tabs button {
  height: 23px;
  gap: 4px;
  padding: 0 6px 0 3px;
  border: solid #7a8a99;
  border-width: 1px 1px 0 0;
  border-top-left-radius: 6px;
  background: #ececec;
}
.tabs button:first-child { border-left-width: 1px; }
.tabs button[aria-selected="true"] { background: #c8d9f3; }
.tabs button:disabled { color: #8b939e; }
.panel {
  flex: 1;
  min-height: 0;
  display: flex;
  flex-direction: column;
  gap: 5px;
  margin: 0 0 2px 1px;
  padding: 4px 0 0;
  border: 1px solid #7a8a99;
  border-left-color: #6382bf;
  outline: 1px solid #c8d9f3;
  box-shadow: inset 0 2px #c8d9f3, inset 0 3px #7a8a99;
}
.line { display: flex; align-items: flex-start; }
.line label { width: 174px; line-height: 20px; text-align: right; }
.line input { height: 20px; margin-left: 5px; padding: 0 1px; border: 1px solid #7a8a99; background: #e9e9eb; }
.line .w80 { width: 80px; }
.line .w245 { width: 245px; text-align: right; }
.line .w563 { width: 563px; }
.line .dl { width: 345px; }
.line .date { width: 66px; color: #000; text-align: center; padding: 0; }
.calb { width: 22px; height: 22px; margin: -1px 0; border: 1px solid #b0b3b8; margin-left: 1px; }
.calb svg { filter: grayscale(1); opacity: 0.35; }

.status {
  flex: none;
  height: 26px;
  display: flex;
  align-items: center;
  justify-content: flex-end;
  padding: 2px 22px 0;
  background: linear-gradient(#fdfefc 9px, #e9e9e6 10px, #e9e9e6 19px, #dcddda 20px);
}
.taskbar { flex: none; height: 4px; display: flex; justify-content: space-between; background: linear-gradient(#1c4fae, #3a7be4); }
.start { width: 93px; background: linear-gradient(#2a7a35, #55b45a); }
.taskbar .tray { width: 75px; background: linear-gradient(#0c5aa8, #1aa0ee); border-left: 1px solid #0a3a80; }
```
